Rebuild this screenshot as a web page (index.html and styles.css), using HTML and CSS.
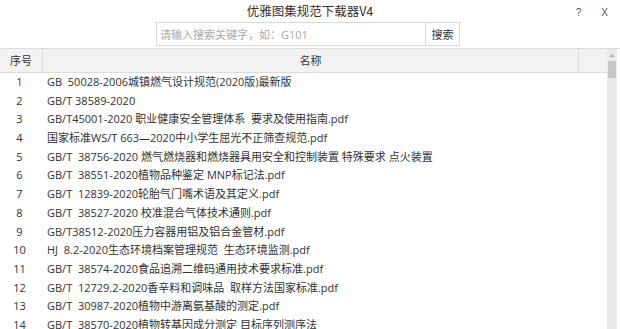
FILE: index.html
```html
<!DOCTYPE html>
<html>
<head>
    <meta name="viewport" content="width=device-width, initial-scale=1.0">
    <title>优雅图集规范下载器V4</title>
    <link rel="stylesheet" href="styles.css">
</head>
<body>
    <div class="titleBar">
        <div></div>
        <h1 class="title">优雅图集规范下载器V4</h1>
        <div class="controls">
            <span class="ctrl">?</span>
            <span class="ctrl">X</span>
        </div>
    </div>

    <div class="searchDiv">
        <input type="text" class="searchInput" placeholder="请输入搜索关键字，如：G101">
        <input type="button" class="searchButton" value="搜索">
    </div>

    <div class="listWrap">
        <div class="listDiv">
            <div class="headRow">
                <div class="headCell colNo">序号</div>
                <div class="headCell colName">名称</div>
                <div class="headCell colRest"></div>
            </div>
            <div class="rows" id="rowsID"></div>
        </div>
        <div class="scrollBar">
            <div class="arrowUp"></div>
            <div class="thumb"></div>
        </div>
    </div>

    <script>
        var names = [
            "GB  50028-2006城镇燃气设计规范(2020版)最新版",
            "GB/T 38589-2020",
            "GB/T45001-2020 职业健康安全管理体系  要求及使用指南.pdf",
            "国家标准WS/T 663—2020中小学生屈光不正筛查规范.pdf",
            "GB/T  38756-2020 燃气燃烧器和燃烧器具用安全和控制装置 特殊要求 点火装置",
            "GB/T  38551-2020植物品种鉴定 MNP标记法.pdf",
            "GB/T  12839-2020轮胎气门嘴术语及其定义.pdf",
            "GB/T  38527-2020 校准混合气体技术通则.pdf",
            "GB/T38512-2020压力容器用铝及铝合金管材.pdf",
            "HJ  8.2-2020生态环境档案管理规范  生态环境监测.pdf",
            "GB/T  38574-2020食品追溯二维码通用技术要求标准.pdf",
            "GB/T  12729.2-2020香辛料和调味品  取样方法国家标准.pdf",
            "GB/T  30987-2020植物中游离氨基酸的测定.pdf",
            "GB/T  38570-2020植物转基因成分测定 目标序列测序法"
        ];
        var html = "";
        for (var i = 0; i < names.length; i++) {
            html += '<div class="row"><div class="cell colNo">' + (i + 1) + '</div><div class="cell colName">' + names[i] + '</div></div>';
        }
        document.getElementById('rowsID').innerHTML = html;
    </script>
</body>
</html>
```

FILE: styles.css
```css
body {
    font-family: "Open Sans", "Noto Sans CJK SC", sans-serif;
    background-color: white;
    color: #333;
    margin: 0;
    padding: 0;
    width: 620px;
    height: 329px;
    overflow: hidden;
}
.titleBar {
    display: grid;
    grid-template-columns: 1fr auto 1fr;
    align-items: center;
    height: 22px;
}
.title {
    font-family: "Noto Sans CJK SC", sans-serif;
    font-size: 12.5px;
    font-weight: normal;
    margin: 0;
    color: #333;
    line-height: 22px;
}
.controls {
    display: flex;
    justify-content: flex-end;
    gap: 20px;
    padding-right: 12px;
    padding-top: 2px;
}
.ctrl {
    font-family: "Liberation Sans", sans-serif;
    font-size: 10px;
    color: #555;
}
.searchDiv {
    display: flex;
    justify-content: center;
    margin: 0 0 2px 0;
    padding-right: 4px;
}
.searchInput {
    font-family: "Open Sans", "Noto Sans CJK SC", sans-serif;
    width: 269px;
    height: 24px;
    box-sizing: border-box;
    border: 1px solid #d9d9d9;
    border-right: none;
    padding: 0 3px;
    font-size: 11px;
    color: #333;
    outline: none;
}
.searchInput::placeholder {
    color: #aaa;
}
.searchButton {
    font-family: "Noto Sans CJK SC", sans-serif;
    width: 35px;
    height: 24px;
    box-sizing: border-box;
    border: 1px solid #d9d9d9;
    background-color: white;
    font-size: 11px;
    color: #333;
    padding: 0;
}
.listWrap {
    display: flex;
    border-top: 1px solid #dcdcdc;
}
.listDiv {
    width: 607px;
}
.headRow {
    display: flex;
    height: 23px;
    background-color: #f2f2f2;
    border-bottom: 1px solid #dcdcdc;
}
.headCell {
    font-size: 11px;
    line-height: 23px;
    text-align: center;
    border-right: 1px solid #dcdcdc;
    box-sizing: border-box;
}
.headCell.colRest {
    flex: 1;
    border-right: none;
}
.colNo {
    width: 43px;
    flex: none;
}
.headCell.colName {
    width: 536px;
    flex: none;
}
.row {
    display: flex;
    height: 18.7px;
    font-size: 11px;
    line-height: 18.7px;
    white-space: pre;
}
.cell.colNo {
    text-align: center;
    padding-right: 4px;
    box-sizing: border-box;
}
.cell.colName {
    padding-left: 4px;
}
.scrollBar {
    width: 10px;
    height: 290px;
    background-color: #e9e9e9;
    margin-right: 3px;
    display: flex;
    flex-direction: column;
    align-items: center;
}
.arrowUp {
    width: 0;
    height: 0;
    margin-top: 5px;
    border-left: 3px solid transparent;
    border-right: 3px solid transparent;
    border-bottom: 3px solid #b5b5b5;
}
.thumb {
    width: 8px;
    height: 17px;
    margin-top: 4px;
    background-color: #c8c8c8;
}
```
